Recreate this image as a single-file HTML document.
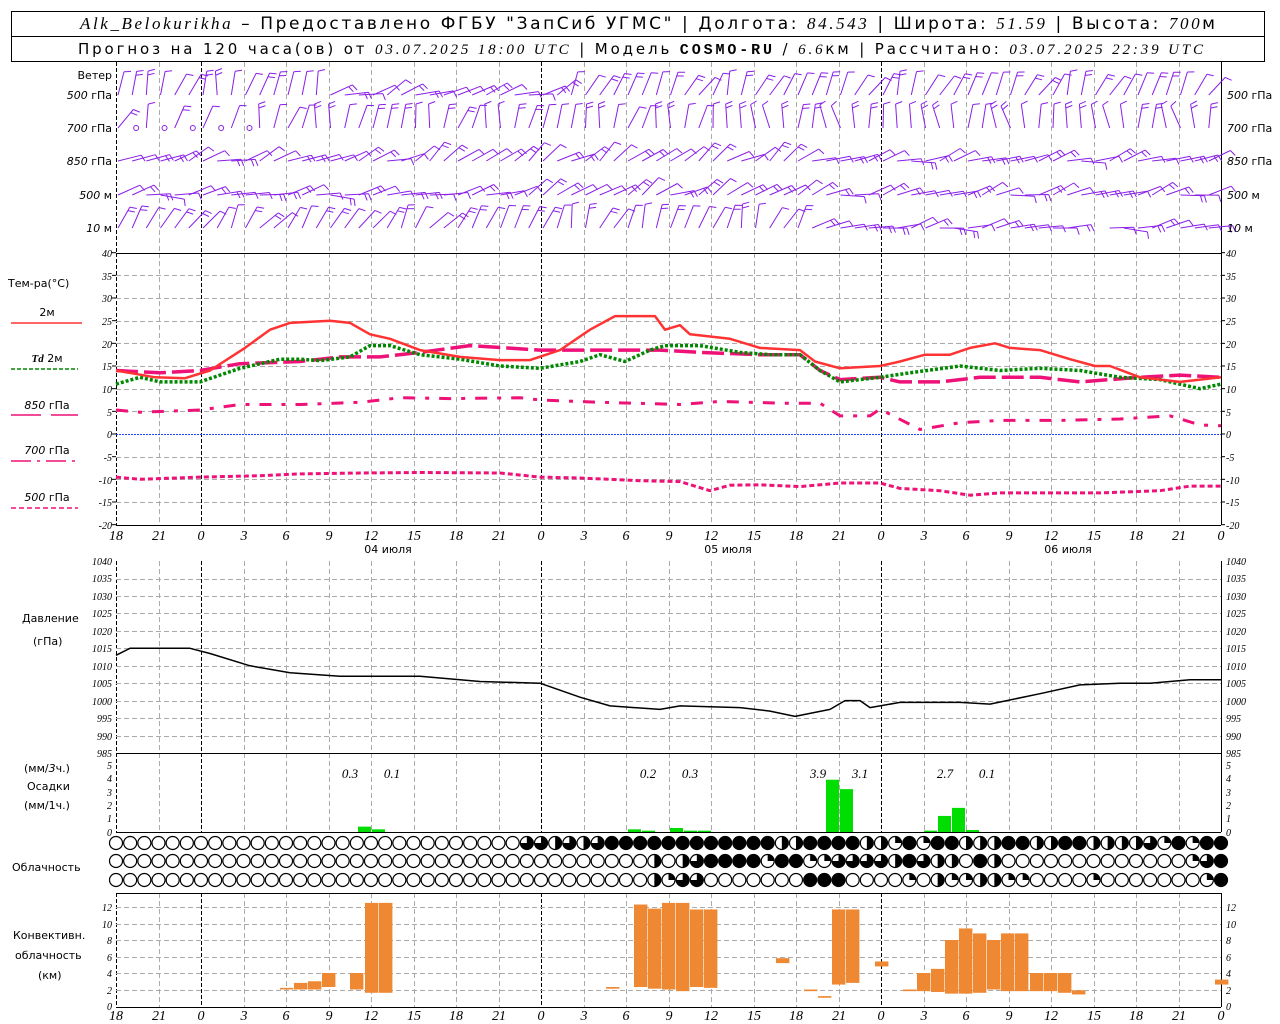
<!DOCTYPE html>
<html><head><meta charset="utf-8"><style>
html,body{margin:0;padding:0;background:#fff;width:1280px;height:1024px;overflow:hidden}
svg{display:block;font-family:"DejaVu Sans","Liberation Sans",sans-serif}
.lb{font-size:11px;fill:#000;font-family:"DejaVu Sans","Liberation Sans",sans-serif}
.ax{font-size:10px;font-style:italic;fill:#000;font-family:"Liberation Serif",serif}
.xt{font-size:14px;font-style:italic;fill:#000;font-family:"Liberation Serif",serif}
</style></head><body>
<svg id="s" width="1280" height="1024" viewBox="0 0 1280 1024" xmlns="http://www.w3.org/2000/svg">
<rect x="11.5" y="11.5" width="1253" height="50" fill="none" stroke="#000"/>
<line x1="11" y1="36.5" x2="1265" y2="36.5" stroke="#000"/>
<text x="80" y="29" textLength="1135" lengthAdjust="spacing" font-size="17" fill="#000" font-family="DejaVu Sans,sans-serif"><tspan font-style="italic" font-family="Liberation Serif,serif">Alk_Belokurikha</tspan> – Предоставлено ФГБУ "ЗапСиб УГМС" | Долгота: <tspan font-style="italic" font-family="Liberation Serif,serif">84.543</tspan> | Широта: <tspan font-style="italic" font-family="Liberation Serif,serif">51.59</tspan> | Высота: <tspan font-style="italic" font-family="Liberation Serif,serif">700</tspan>м</text>
<text x="78" y="54" textLength="1125" lengthAdjust="spacing" font-size="15" fill="#000" font-family="DejaVu Sans,sans-serif">Прогноз на 120 часа(ов) от <tspan font-style="italic" font-family="Liberation Serif,serif">03.07.2025 18:00 UTC</tspan>  | Модель <tspan font-weight="bold" font-family="Liberation Mono,monospace">COSMO-RU</tspan> / <tspan font-style="italic" font-family="Liberation Serif,serif">6.6</tspan>км | Рассчитано: <tspan font-style="italic" font-family="Liberation Serif,serif">03.07.2025 22:39 UTC</tspan></text>
<g id="grid"></g><g id="dat"></g>
<text class="lb" x="112" y="79" text-anchor="end">Ветер</text>
<text class="lb" x="112" y="99" text-anchor="end"><tspan font-style="italic">500</tspan> гПа</text>
<text class="lb" x="112" y="132" text-anchor="end"><tspan font-style="italic">700</tspan> гПа</text>
<text class="lb" x="112" y="165" text-anchor="end"><tspan font-style="italic">850</tspan> гПа</text>
<text class="lb" x="112" y="199" text-anchor="end"><tspan font-style="italic">500</tspan> м</text>
<text class="lb" x="112" y="232" text-anchor="end"><tspan font-style="italic">10</tspan>   м</text>
<text class="lb" x="1227" y="99"><tspan font-style="italic">500</tspan> гПа</text>
<text class="lb" x="1227" y="132"><tspan font-style="italic">700</tspan> гПа</text>
<text class="lb" x="1227" y="165"><tspan font-style="italic">850</tspan> гПа</text>
<text class="lb" x="1227" y="199"><tspan font-style="italic">500</tspan> м</text>
<text class="lb" x="1227" y="232"><tspan font-style="italic">10</tspan>   м</text>
<text class="lb" x="8" y="287" font-size="12">Тем-ра(°C)</text>
<text class="lb" x="47" y="316" text-anchor="middle">2м</text>
<line x1="11" y1="323" x2="82" y2="323" stroke="#ff3333" stroke-width="1.5"/>
<text class="lb" x="47" y="362" text-anchor="middle"><tspan font-style="italic" font-weight="bold" font-family="Liberation Serif,serif">Td</tspan>  2м</text>
<line x1="11" y1="369" x2="78" y2="369" stroke="#008800" stroke-width="1.5" stroke-dasharray="4,2"/>
<text class="lb" x="47" y="409" text-anchor="middle"><tspan font-style="italic">850</tspan> гПа</text>
<line x1="11" y1="415" x2="78" y2="415" stroke="#ee1177" stroke-width="1.5" stroke-dasharray="30,10"/>
<text class="lb" x="47" y="454" text-anchor="middle"><tspan font-style="italic">700</tspan> гПа</text>
<line x1="11" y1="461" x2="78" y2="461" stroke="#ee1177" stroke-width="1.5" stroke-dasharray="20,6,3,6"/>
<text class="lb" x="47" y="501" text-anchor="middle"><tspan font-style="italic">500</tspan> гПа</text>
<line x1="11" y1="508" x2="78" y2="508" stroke="#ee1177" stroke-width="1.5" stroke-dasharray="5,3"/>
<text class="lb" x="388" y="553" text-anchor="middle" font-size="12">04 июля</text>
<text class="lb" x="728" y="553" text-anchor="middle" font-size="12">05 июля</text>
<text class="lb" x="1068" y="553" text-anchor="middle" font-size="12">06 июля</text>
<text class="lb" x="22" y="622" font-size="12">Давление</text>
<text class="lb" x="33" y="645" font-size="12">(гПа)</text>
<text class="lb" x="24" y="772">(мм/<tspan font-style="italic">3</tspan>ч.)</text>
<text class="lb" x="27" y="790">Осадки</text>
<text class="lb" x="24" y="809">(мм/1ч.)</text>
<text class="lb" x="12" y="871" font-size="12">Облачность</text>
<text class="lb" x="13" y="939">Конвективн.</text>
<text class="lb" x="15" y="959">облачность</text>
<text class="lb" x="38" y="979">(км)</text>
<g class="ax" font-size="13">
<text x="350" y="778" text-anchor="middle" font-size="13" font-style="italic">0.3</text>
<text x="392" y="778" text-anchor="middle" font-size="13" font-style="italic">0.1</text>
<text x="648" y="778" text-anchor="middle" font-size="13" font-style="italic">0.2</text>
<text x="690" y="778" text-anchor="middle" font-size="13" font-style="italic">0.3</text>
<text x="818" y="778" text-anchor="middle" font-size="13" font-style="italic">3.9</text>
<text x="860" y="778" text-anchor="middle" font-size="13" font-style="italic">3.1</text>
<text x="945" y="778" text-anchor="middle" font-size="13" font-style="italic">2.7</text>
<text x="987" y="778" text-anchor="middle" font-size="13" font-style="italic">0.1</text>
</g>
<g id="txt">
<text class="ax" x="112" y="257" text-anchor="end">40</text><text class="ax" x="1226" y="257">40</text>
<text class="ax" x="112" y="280" text-anchor="end">35</text><text class="ax" x="1226" y="280">35</text>
<text class="ax" x="112" y="302" text-anchor="end">30</text><text class="ax" x="1226" y="302">30</text>
<text class="ax" x="112" y="325" text-anchor="end">25</text><text class="ax" x="1226" y="325">25</text>
<text class="ax" x="112" y="348" text-anchor="end">20</text><text class="ax" x="1226" y="348">20</text>
<text class="ax" x="112" y="370" text-anchor="end">15</text><text class="ax" x="1226" y="370">15</text>
<text class="ax" x="112" y="393" text-anchor="end">10</text><text class="ax" x="1226" y="393">10</text>
<text class="ax" x="112" y="416" text-anchor="end">5</text><text class="ax" x="1226" y="416">5</text>
<text class="ax" x="112" y="438" text-anchor="end">0</text><text class="ax" x="1226" y="438">0</text>
<text class="ax" x="112" y="461" text-anchor="end">-5</text><text class="ax" x="1226" y="461">-5</text>
<text class="ax" x="112" y="484" text-anchor="end">-10</text><text class="ax" x="1226" y="484">-10</text>
<text class="ax" x="112" y="506" text-anchor="end">-15</text><text class="ax" x="1226" y="506">-15</text>
<text class="ax" x="112" y="529" text-anchor="end">-20</text><text class="ax" x="1226" y="529">-20</text>
<text class="ax" x="112" y="565" text-anchor="end">1040</text><text class="ax" x="1226" y="565">1040</text>
<text class="ax" x="112" y="582" text-anchor="end">1035</text><text class="ax" x="1226" y="582">1035</text>
<text class="ax" x="112" y="600" text-anchor="end">1030</text><text class="ax" x="1226" y="600">1030</text>
<text class="ax" x="112" y="617" text-anchor="end">1025</text><text class="ax" x="1226" y="617">1025</text>
<text class="ax" x="112" y="635" text-anchor="end">1020</text><text class="ax" x="1226" y="635">1020</text>
<text class="ax" x="112" y="652" text-anchor="end">1015</text><text class="ax" x="1226" y="652">1015</text>
<text class="ax" x="112" y="670" text-anchor="end">1010</text><text class="ax" x="1226" y="670">1010</text>
<text class="ax" x="112" y="687" text-anchor="end">1005</text><text class="ax" x="1226" y="687">1005</text>
<text class="ax" x="112" y="705" text-anchor="end">1000</text><text class="ax" x="1226" y="705">1000</text>
<text class="ax" x="112" y="722" text-anchor="end">995</text><text class="ax" x="1226" y="722">995</text>
<text class="ax" x="112" y="740" text-anchor="end">990</text><text class="ax" x="1226" y="740">990</text>
<text class="ax" x="112" y="757" text-anchor="end">985</text><text class="ax" x="1226" y="757">985</text>
<text class="ax" x="112" y="769" text-anchor="end">5</text><text class="ax" x="1226" y="769">5</text>
<text class="ax" x="112" y="782" text-anchor="end">4</text><text class="ax" x="1226" y="782">4</text>
<text class="ax" x="112" y="796" text-anchor="end">3</text><text class="ax" x="1226" y="796">3</text>
<text class="ax" x="112" y="809" text-anchor="end">2</text><text class="ax" x="1226" y="809">2</text>
<text class="ax" x="112" y="822" text-anchor="end">1</text><text class="ax" x="1226" y="822">1</text>
<text class="ax" x="112" y="836" text-anchor="end">0</text><text class="ax" x="1226" y="836">0</text>
<text class="ax" x="112" y="911" text-anchor="end">12</text><text class="ax" x="1226" y="911">12</text>
<text class="ax" x="112" y="928" text-anchor="end">10</text><text class="ax" x="1226" y="928">10</text>
<text class="ax" x="112" y="944" text-anchor="end">8</text><text class="ax" x="1226" y="944">8</text>
<text class="ax" x="112" y="961" text-anchor="end">6</text><text class="ax" x="1226" y="961">6</text>
<text class="ax" x="112" y="977" text-anchor="end">4</text><text class="ax" x="1226" y="977">4</text>
<text class="ax" x="112" y="994" text-anchor="end">2</text><text class="ax" x="1226" y="994">2</text>
<text class="ax" x="112" y="1010" text-anchor="end">0</text><text class="ax" x="1226" y="1010">0</text>
</g>
<g class="xt" text-anchor="middle">
<text x="116" y="540">18</text><text x="159" y="540">21</text><text x="201" y="540">0</text><text x="244" y="540">3</text><text x="286" y="540">6</text><text x="329" y="540">9</text><text x="371" y="540">12</text><text x="414" y="540">15</text><text x="456" y="540">18</text><text x="499" y="540">21</text><text x="541" y="540">0</text><text x="584" y="540">3</text><text x="626" y="540">6</text><text x="669" y="540">9</text><text x="711" y="540">12</text><text x="754" y="540">15</text><text x="796" y="540">18</text><text x="839" y="540">21</text><text x="881" y="540">0</text><text x="924" y="540">3</text><text x="966" y="540">6</text><text x="1009" y="540">9</text><text x="1051" y="540">12</text><text x="1094" y="540">15</text><text x="1136" y="540">18</text><text x="1179" y="540">21</text><text x="1221" y="540">0</text>
<text x="116" y="1020">18</text><text x="159" y="1020">21</text><text x="201" y="1020">0</text><text x="244" y="1020">3</text><text x="286" y="1020">6</text><text x="329" y="1020">9</text><text x="371" y="1020">12</text><text x="414" y="1020">15</text><text x="456" y="1020">18</text><text x="499" y="1020">21</text><text x="541" y="1020">0</text><text x="584" y="1020">3</text><text x="626" y="1020">6</text><text x="669" y="1020">9</text><text x="711" y="1020">12</text><text x="754" y="1020">15</text><text x="796" y="1020">18</text><text x="839" y="1020">21</text><text x="881" y="1020">0</text><text x="924" y="1020">3</text><text x="966" y="1020">6</text><text x="1009" y="1020">9</text><text x="1051" y="1020">12</text><text x="1094" y="1020">15</text><text x="1136" y="1020">18</text><text x="1179" y="1020">21</text><text x="1221" y="1020">0</text>
</g>
</svg>
<script>
(function(){
var NS="http://www.w3.org/2000/svg",G=document.getElementById("grid"),D=document.getElementById("dat");
function el(p,t,a){var e=document.createElementNS(NS,t);for(var k in a)e.setAttribute(k,a[k]);p.appendChild(e);return e;}
var L=116,R=1221,HX=(R-L)/78;function X(h){return L+h*HX;}
var panels=[[62,253],[253,525],[561,753],[753,832],[893,1007]];
for(var i=0;i<=26;i++){var x=Math.round(X(i*3))+.5;var day=(i%8==2);
 panels.forEach(function(p){el(G,"line",{x1:x,y1:p[0],x2:x,y2:p[1],stroke:day||i==0?"#000":"#aaa","stroke-dasharray":day||i==0?"4,2":"5,3"});});}
function hl(y,c,d){el(G,"line",{x1:L,y1:y+.5,x2:R,y2:y+.5,stroke:c,"stroke-dasharray":d||""});}
for(var t=35;t>=-20;t-=5){var y=Math.round(434-t*4.533);if(t==0)continue;hl(y,"#aaa","5,3");}
for(var p=1035;p>985;p-=5){hl(Math.round(753-(p-985)*3.49),"#aaa","5,3");}
for(var k=2;k<=12;k+=2){hl(Math.round(1006-k*8.25),"#aaa","5,3");}
hl(434,"#2244ff","2,1");
[253,753,832,893,1007].forEach(function(y){hl(y,"#000");});
hl(525,"#000");
panels.forEach(function(p){el(G,"line",{x1:R+.5,y1:p[0],x2:R+.5,y2:p[1],stroke:"#000"});});
for(var t=40;t>=-20;t-=5){var y=434-t*4.533;el(G,"line",{x1:R,y1:y,x2:R+4,y2:y,stroke:"#000"});el(G,"line",{x1:L-4,y1:y,x2:L,y2:y,stroke:"#000"});}
function curve(pts,f,st){var s="";pts.forEach(function(q,i){s+=(i?"L":"M")+q[0]+","+f(q[1]).toFixed(1);});var a={d:s,fill:"none","stroke-linejoin":"round"};for(var k in st)a[k]=st[k];el(D,"path",a);}
var TY=function(t){return 434-t*4.533;};
curve([[116,5.3],[140,4.8],[200,5.3],[240,6.5],[300,6.5],[360,7],[400,8],[450,7.8],[520,8],[540,7.5],[600,7],[680,6.5],[720,7.2],[780,6.8],[820,6.8],[840,4],[870,4],[880,5.5],[920,1],[960,2.5],[1000,3],[1060,3],[1120,3.3],[1170,4],[1200,2],[1221,1.8]],TY,{stroke:"#ee1177","stroke-width":3,"stroke-dasharray":"12,10,4,10"});
curve([[116,-9.5],[140,-10],[200,-9.5],[260,-9.2],[300,-8.8],[360,-8.6],[420,-8.5],[500,-8.6],[540,-9.5],[580,-9.7],[640,-10.3],[680,-10.5],[710,-12.5],[730,-11.3],[760,-11.2],[800,-11.6],[840,-10.8],[880,-10.8],[900,-12],[940,-12.5],[970,-13.5],[1000,-13],[1100,-13],[1160,-12.5],[1190,-11.5],[1221,-11.5]],TY,{stroke:"#ee1177","stroke-width":3,"stroke-dasharray":"5,3"});
curve([[116,14],[160,13.5],[200,14],[240,15.5],[300,16],[340,17],[380,17],[420,18],[470,19.5],[540,18.5],[600,18.5],[660,18.5],[700,18],[760,17.5],[800,17.5],[820,14],[840,12],[880,12.5],[900,11.5],[940,11.5],[980,12.5],[1040,12.5],[1080,11.5],[1140,12.5],[1180,13],[1221,12.5]],TY,{stroke:"#ee1177","stroke-width":3.5,"stroke-dasharray":"22,6"});
curve([[116,11],[140,12.5],[160,11.5],[200,11.5],[240,14.5],[280,16.5],[300,16.5],[320,16.2],[350,17],[370,19.5],[390,19.5],[420,17.5],[460,16.5],[500,15],[540,14.5],[580,16],[600,17.5],[625,16],[650,18.5],[665,19.5],[700,19.5],[740,18],[770,17.5],[800,17.5],[820,14],[840,11.5],[860,12],[880,12.5],[910,13.5],[960,15],[1000,14],[1040,14.5],[1080,14],[1120,12.5],[1160,12],[1200,10],[1221,11]],TY,{stroke:"#008800","stroke-width":3.5,"stroke-dasharray":"3,2"});
curve([[116,14],[155,12.5],[185,12.3],[210,14],[245,19],[270,23],[290,24.5],[330,25],[350,24.5],[370,22],[390,21],[420,18.5],[460,17],[500,16.3],[530,16.3],[560,18.5],[590,23],[615,26],[640,26],[655,26],[665,23],[680,24],[690,22],[710,21.5],[730,21],[760,19],[800,18.5],[815,16],[840,14.5],[880,15],[900,16],[925,17.5],[950,17.5],[970,19],[995,20],[1010,19],[1040,18.5],[1070,16.5],[1095,15],[1110,15],[1140,12.5],[1180,11.5],[1221,12.5]],TY,{stroke:"#ff3333","stroke-width":2.5});
curve([[116,1013],[130,1015],[190,1015],[210,1013.5],[250,1010],[290,1008],[340,1007],[370,1007],[420,1007],[480,1005.5],[540,1005],[580,1001],[610,998.5],[660,997.5],[680,998.5],[740,998],[770,997],[795,995.5],[830,997.5],[845,1000],[860,1000],[870,998],[900,999.5],[960,999.5],[990,999],[1040,1002],[1080,1004.5],[1120,1005],[1150,1005],[1190,1006],[1221,1006]],function(p){return 753-(p-985)*3.49;},{stroke:"#000","stroke-width":1.5});
[[358,0.4],[372,0.2],[628,0.2],[642,0.1],[670,0.3],[684,0.1],[698,0.1],[826,3.9],[840,3.2],[924,0.1],[938,1.2],[952,1.8],[966,0.15]].forEach(function(b){var h=b[1]*13.4;el(D,"rect",{x:b[0],y:832-h,width:13,height:h,fill:"#00dd00"});});
[[280,2,2.2],[294,2,2.8],[308,2,3],[322,2.3,4],[350,2,4],[365,1.6,12.5],[379,1.6,12.5],[606,2.1,2.3],[634,2.3,12.3],[648,2.1,11.8],[662,2,12.5],[676,1.8,12.5],[690,2.3,11.7],[704,2.2,11.7],[776,5.2,5.8],[804,1.8,2],[818,1,1.2],[832,2.6,11.7],[846,2.8,11.7],[875,4.8,5.4],[903,1.8,2],[917,1.8,4],[931,1.7,4.5],[945,1.5,8],[959,1.5,9.4],[973,1.6,8.8],[987,2,8],[1001,1.8,8.8],[1015,1.8,8.8],[1030,1.8,4],[1044,1.8,4],[1058,1.6,4],[1072,1.4,1.9],[1215,2.6,3.2]].forEach(function(b){var y1=1006-b[2]*8.25,y2=1006-b[1]*8.25;el(D,"rect",{x:b[0],y:y1,width:13.4,height:y2-y1,fill:"#ee8833"});});
function pad(s){while(s.length<79)s+="0";return s.slice(0,79);}
var rows=[],r0="";for(var i=0;i<28;i++)r0+="0";r0+="0332323444444444444224444221";
r0+="41442224422442222314144";rows[0]=pad(r0);
var r1="";for(i=0;i<38;i++)r1+="0";r1+="20234444144";r1+="1133";r1+="3324322042000000000000000";rows[1]=pad(r1.slice(0,76)+"000");rows[1]=rows[1].slice(0,76)+"134";
var r2="";for(i=0;i<38;i++)r2+="0";r2+="2133000000044400";r2+="0010211221100001";rows[2]=pad(r2);rows[2]=rows[2].slice(0,77)+"14";
var cy=[843,861,880];
rows.forEach(function(s,ri){for(var i=0;i<79;i++){var x=X(i),y=cy[ri],r=6.5,c=s[i]||"0";
 el(D,"circle",{cx:x,cy:y,r:r,fill:c=="4"?"#000":"#fff",stroke:"#000","stroke-width":1.2});
 if(c=="1")el(D,"path",{d:"M"+x+","+y+"v"+(-r)+"a"+r+","+r+" 0 0 1 "+r+","+r+"z",fill:"#000"});
 if(c=="2")el(D,"path",{d:"M"+x+","+(y-r)+"a"+r+","+r+" 0 0 1 0,"+(2*r)+"z",fill:"#000"});
 if(c=="3")el(D,"path",{d:"M"+x+","+y+"v"+(-r)+"a"+r+","+r+" 0 1 1 "+(-r)+","+r+"z",fill:"#000"});
}});
var lv=[95,128,161,195,228];
function ang(l,x){var n=Math.sin(x*0.37+l*1.7)*12+Math.sin(x*0.11+l)*8;
 if(l==0)return (x<330?15:x<560?70:25)+n;
 if(l==1)return (x<250?20:x<700?10:-5)+n;
 if(l==2)return (x<400?70:x<800?55:75)+n;
 if(l==3)return (x<500?80:x<800?60:75)+n;
 return (x<500?35:x<800?20:80)+n;}
for(var l=0;l<5;l++){for(var i=0;i<78;i++){var x=X(i)+2,y=lv[l];
 if(l==1&&i>0&&i<11&&i%2==1){el(D,"circle",{cx:x+4,cy:y,r:2.5,fill:"none",stroke:"#8a1ee8"});continue;}
 if(l==4&&x>1080&&x<1100)continue;
 var a=ang(l,x)*Math.PI/180,len=24,dx=Math.sin(a),dy=-Math.cos(a);
 var tx=x+dx*len,ty=y+dy*len,d="M"+x.toFixed(1)+","+y+"L"+tx.toFixed(1)+","+ty.toFixed(1);
 var nf=1+Math.floor((Math.sin(i*1.3+l*2)+1)*0.9);
 var fa=a+Math.PI*0.4;
 for(var f=0;f<nf;f++){var bx=tx-dx*f*4,by=ty-dy*f*4;d+="M"+bx.toFixed(1)+","+by.toFixed(1)+"l"+(Math.sin(fa)*7).toFixed(1)+","+(-Math.cos(fa)*7).toFixed(1);}
 el(D,"path",{d:d,stroke:"#8a1ee8","stroke-width":1,fill:"none"});}}
})();
</script>
</body></html>
